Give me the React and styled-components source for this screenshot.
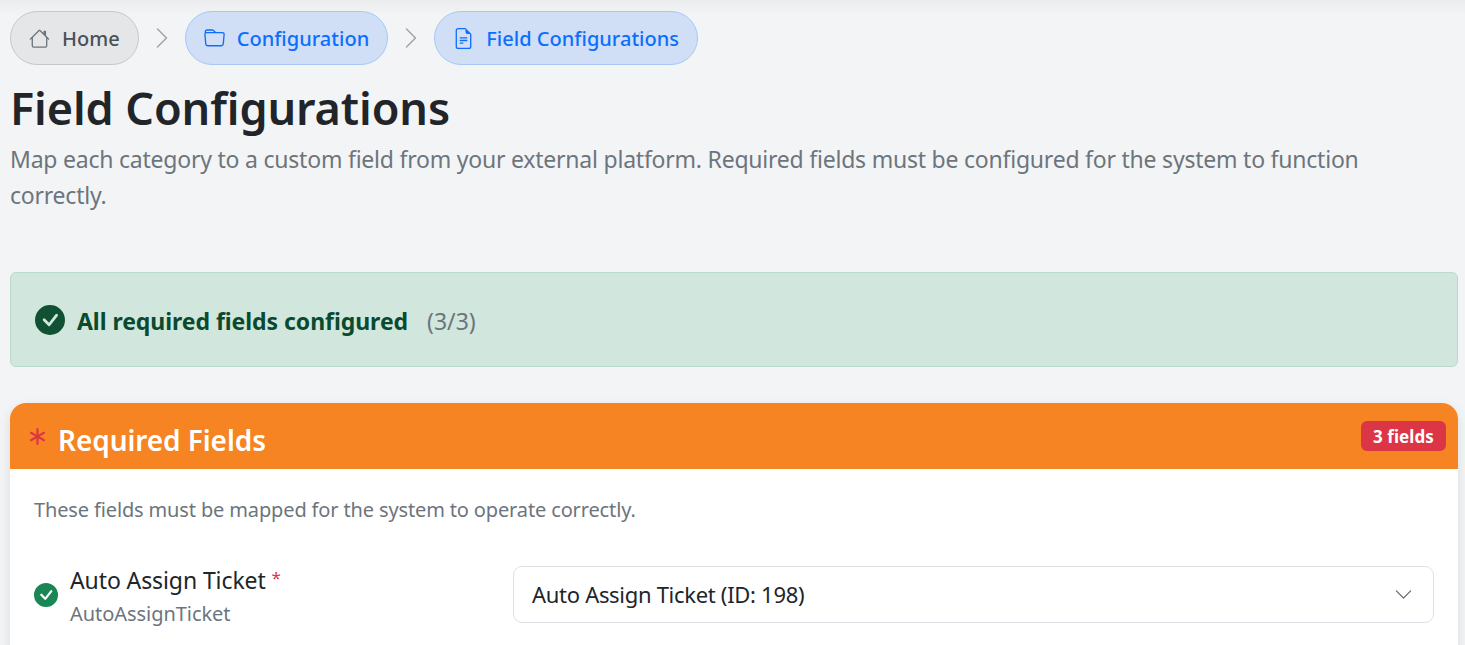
import React from 'react';
import styled, { createGlobalStyle } from 'styled-components';
import {
  BsAsterisk,
  BsCheckCircleFill,
  BsChevronDown,
  BsChevronRight,
  BsFileEarmarkText,
  BsFolder,
  BsHouse,
} from 'react-icons/bs';

const GlobalStyle = createGlobalStyle`
  html, body {
    margin: 0;
    height: 100%;
    overflow: hidden;
    background: #f3f4f6;
    font-family: "Noto Sans", "Open Sans", sans-serif;
    color: #212529;
  }
  * { box-sizing: border-box; }
`;

const Page = styled.div`
  height: 645px;
  padding: 11px 7px 0 10px;
  background: linear-gradient(#ebecee 0, #f3f4f6 16px);
  overflow: hidden;
`;

const Crumbs = styled.nav`
  display: flex;
  align-items: center;
  height: 54px;
`;

const Crumb = styled.div`
  display: flex;
  align-items: center;
  gap: 12px;
  height: 54px;
  padding: 0 18px;
  border-radius: 27px;
  border: 1px solid ${({ $home }) => ($home ? '#c6c8ca' : '#a6c8f8')};
  background: ${({ $home }) => ($home ? '#e5e6e8' : '#d0dff5')};
  color: ${({ $home }) => ($home ? '#495057' : '#0d6efd')};
  font-size: 20px;
  font-weight: 500;
  letter-spacing: 0.02px;
  svg {
    font-size: 21px;
    color: ${({ $home }) => ($home ? '#6c757d' : '#0d6efd')};
  }
`;

const Sep = styled.span`
  display: flex;
  justify-content: center;
  width: 46px;
  color: #a3a5a8;
  font-size: 24px;
`;

const Title = styled.h1`
  margin: 7px 0 0;
  font-size: 45px;
  line-height: 72px;
  font-weight: 600;
  letter-spacing: -0.1px;
  color: #212529;
`;

const Lead = styled.p`
  margin: -3px 0 0;
  padding-right: 40px;
  font-size: 23px;
  line-height: 36px;
  color: #6c757d;
  letter-spacing: -0.22px;
`;

const Alert = styled.div`
  display: flex;
  align-items: center;
  height: 95px;
  margin-top: 59px;
  padding: 0 24px;
  border: 1px solid #badbcc;
  border-radius: 6px;
  background: #d1e7dd;
`;

const AlertIcon = styled(BsCheckCircleFill)`
  font-size: 30px;
  color: #0f5132;
  margin-right: 12px;
`;

const AlertText = styled.strong`
  padding-top: 2px;
  font-size: 23px;
  font-weight: 700;
  letter-spacing: -0.05px;
  color: #0a4a2e;
`;

const AlertCount = styled.span`
  margin-left: 19px;
  padding-top: 2px;
  font-size: 23px;
  color: #6c757d;
`;

const Card = styled.section`
  margin-top: 36px;
  border-radius: 16px 16px 0 0;
  background: #fff;
  box-shadow: 0 4px 12px rgba(0, 0, 0, 0.1);
`;

const CardHeader = styled.header`
  display: flex;
  align-items: center;
  height: 66px;
  padding: 0 12px 0 19px;
  border-radius: 16px 16px 0 0;
  background: #f68422;
`;

const HeaderStar = styled(BsAsterisk)`
  font-size: 17px;
  color: #dc3545;
  margin-right: 12px;
`;

const CardTitle = styled.h2`
  flex: 1;
  margin: 0;
  padding-top: 8px;
  font-size: 28px;
  font-weight: 600;
  letter-spacing: -0.08px;
  color: #fff;
`;

const Badge = styled.span`
  padding: 6px 12px 4px;
  border-radius: 6px;
  background: #dc3545;
  color: #fff;
  font-size: 17px;
  line-height: 20px;
  font-weight: 700;
  letter-spacing: 0.1px;
`;

const CardBody = styled.div`
  padding: 24px 24px 60px;
`;

const Hint = styled.p`
  margin: 0 0 32px;
  font-size: 20px;
  line-height: 34px;
  letter-spacing: -0.14px;
  color: #6c757d;
`;

const Row = styled.div`
  display: grid;
  grid-template-columns: 479px 1fr;
  align-items: center;
`;

const FieldLabel = styled.div`
  display: flex;
  align-items: center;
  gap: 12px;
`;

const LabelText = styled.div`
  padding-top: 5px;
`;

const StatusIcon = styled(BsCheckCircleFill)`
  font-size: 24px;
  color: #198754;
`;

const LabelName = styled.div`
  font-size: 23px;
  line-height: 32px;
  letter-spacing: -0.1px;
  color: #212529;
`;

const Required = styled.sup`
  color: #dc3545;
  font-size: 17px;
  line-height: 0;
  vertical-align: 5px;
`;

const LabelKey = styled.div`
  padding-top: 1px;
  font-size: 20px;
  line-height: 33px;
  letter-spacing: -0.05px;
  color: #6c757d;
`;

const Select = styled.div`
  display: flex;
  align-items: center;
  justify-content: space-between;
  height: 57px;
  padding: 0 20px 2px 18px;
  border: 1px solid #dee2e6;
  border-radius: 9px;
  background: #fff;
  font-size: 22px;
  letter-spacing: -0.3px;
  color: #212529;
  svg { color: #5f6770; font-size: 19px; margin-top: 2px; }
`;

export default function App() {
  return (
    <Page>
      <GlobalStyle />
      <Crumbs>
        <Crumb $home><BsHouse />Home</Crumb>
        <Sep><BsChevronRight /></Sep>
        <Crumb><BsFolder />Configuration</Crumb>
        <Sep><BsChevronRight /></Sep>
        <Crumb><BsFileEarmarkText />Field Configurations</Crumb>
      </Crumbs>
      <Title>Field Configurations</Title>
      <Lead>
        Map each category to a custom field from your external platform. Required fields must be configured for the system to function correctly.
      </Lead>
      <Alert>
        <AlertIcon />
        <AlertText>All required fields configured</AlertText>
        <AlertCount>(3/3)</AlertCount>
      </Alert>
      <Card>
        <CardHeader>
          <HeaderStar />
          <CardTitle>Required Fields</CardTitle>
          <Badge>3 fields</Badge>
        </CardHeader>
        <CardBody>
          <Hint>These fields must be mapped for the system to operate correctly.</Hint>
          <Row>
            <FieldLabel>
              <StatusIcon />
              <LabelText>
                <LabelName>Auto Assign Ticket <Required>*</Required></LabelName>
                <LabelKey>AutoAssignTicket</LabelKey>
              </LabelText>
            </FieldLabel>
            <Select>
              Auto Assign Ticket (ID: 198)
              <BsChevronDown />
            </Select>
          </Row>
        </CardBody>
      </Card>
    </Page>
  );
}
